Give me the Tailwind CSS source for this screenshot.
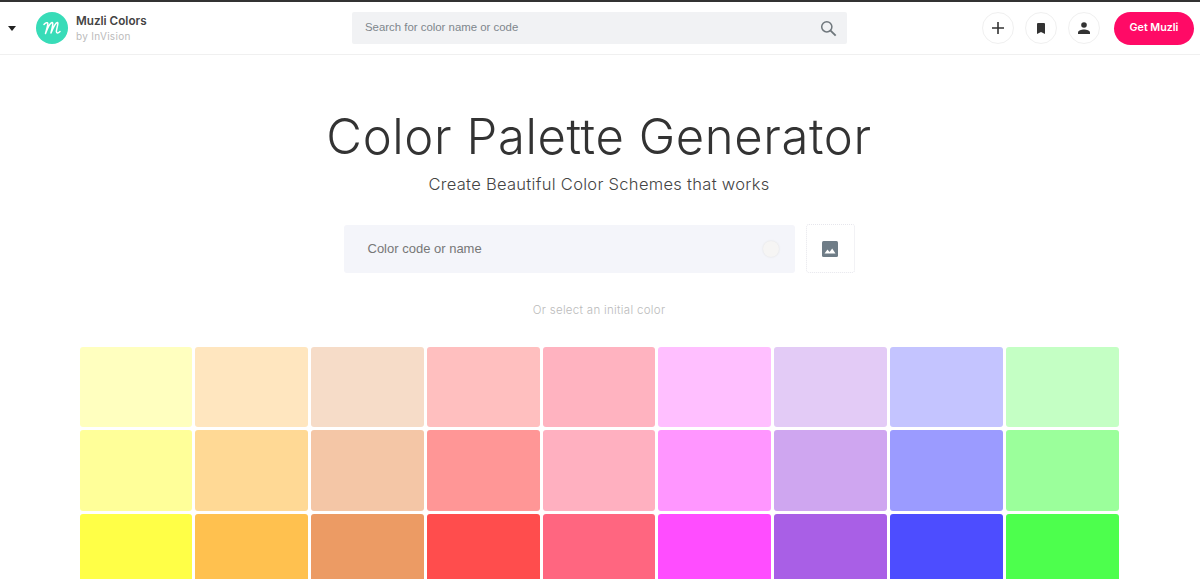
<!DOCTYPE html>
<html lang="en">
<head>
  <meta charset="UTF-8" />
  <meta name="viewport" content="width=device-width, initial-scale=1.0" />
  <title>Color Palette Generator</title>
  <script src="https://cdn.jsdelivr.net/npm/@tailwindcss/browser@4"></script>
</head>
<body class="bg-white font-['Inter',sans-serif] text-[#333] h-[579px] overflow-hidden">

  <!-- Top bar -->
  <header class="h-[55px] border-t-2 border-b border-t-[#333] border-b-[#f0f0f0] flex items-center relative">
    <span class="ml-[8px] w-0 h-0 border-l-[4px] border-r-[4px] border-t-[5px] border-l-transparent border-r-transparent border-t-[#222]"></span>
    <div class="ml-[20px] w-[32px] h-[32px] rounded-full bg-[#38dcb8] flex items-center justify-center">
      <svg width="18" height="14" viewBox="0 0 18 14" fill="none" stroke="#fff" stroke-width="1.500" stroke-linecap="round" stroke-linejoin="round"><path d="M1 3.500C2.500 1.500 4.500 1 4.800 2.500 5 4 3.500 9 2.500 12.500 4.500 7 7 2 9 1.500 10.500 1.300 9.500 5 8 12 10 7 12.500 1.800 14.300 1.500 15.700 1.500 14 6 13.400 10 13.200 12.500 15 12.500 17 10.500"/></svg>
    </div>
    <div class="ml-[8px] flex flex-col">
      <span class="text-[11.700px] leading-[16px] font-semibold text-[#444]">Muzli Colors</span>
      <span class="text-[10px] leading-[15px] tracking-[0.3px] text-[#bbb]">by InVision</span>
    </div>
    <div class="absolute left-[352px] top-[10px] w-[495px] h-[32px] bg-[#f1f2f4] rounded-[2px] flex items-center justify-between pl-[13px] pr-[10px]">
      <span class="font-['Liberation_Sans',sans-serif] text-[11.400px] text-[#7e868c]">Search for color name or code</span>
      <svg width="17" height="17" viewBox="0 0 18 18" fill="none" stroke="#6f777c" stroke-width="1.600"><circle cx="7.200" cy="7.200" r="5.400"/><path d="M11.200 11.200 16.600 16.600" stroke-width="2"/></svg>
    </div>
    <div class="ml-auto mr-[6px] flex items-center">
      <button class="w-[32px] h-[32px] rounded-full border border-[#f0f0f0] flex items-center justify-center">
        <svg width="12" height="12" viewBox="0 0 12 12" fill="none" stroke="#333" stroke-width="1.600"><path d="M6 0v12M0 6h12"/></svg>
      </button>
      <button class="ml-[11px] w-[32px] h-[32px] rounded-full border border-[#f0f0f0] flex items-center justify-center">
        <svg width="8" height="11" viewBox="0 0 8 11" fill="#333"><path d="M0 1a1 1 0 0 1 1-1h6a1 1 0 0 1 1 1v10L4 9 0 11z"/></svg>
      </button>
      <button class="ml-[11px] mr-[1px] w-[32px] h-[32px] rounded-full border border-[#f0f0f0] flex items-center justify-center">
        <svg width="12" height="12" viewBox="0 0 12 12" fill="#333"><circle cx="6" cy="3" r="2.800"/><path d="M0 12v-1.600C0 8.400 3.400 7.400 6 7.400s6 1 6 3V12z"/></svg>
      </button>
      <button class="ml-[13px] w-[80px] h-[33px] rounded-full bg-[#ff0a66] text-white text-[10.700px] font-semibold">Get Muzli</button>
    </div>
  </header>

  <!-- Hero -->
  <main class="flex flex-col items-center">
    <h1 class="mt-[52px] mr-[2px] text-[49px] leading-[60px] font-light tracking-[0.6px] text-[#333]">Color Palette Generator</h1>
    <p class="mt-[5px] mr-[2px] text-[16.500px] leading-[24px] font-light tracking-[0.3px] text-[#444]">Create Beautiful Color Schemes that works</p>

    <div class="mt-[28px] mr-[2px] flex items-center gap-[11px]">
      <div class="w-[451px] h-[48px] bg-[#f4f5fa] rounded-[3px] flex items-center justify-between pl-[24px] pr-[16px]">
        <span class="font-['Liberation_Sans',sans-serif] text-[13px] text-[#777]">Color code or name</span>
        <span class="w-[16px] h-[16px] rounded-full bg-[#f6f5f4] shadow-[0_0_2px_#ddd]"></span>
      </div>
      <div class="w-[49px] h-[49px] rounded-[3px] border border-dotted border-[#e6e6ec] flex items-center justify-center">
        <svg width="16" height="16" viewBox="0 0 16 16"><rect width="16" height="16" rx="1.500" fill="#6f7d87"/><path d="M2.500 12.500 5.500 8.500 7.500 11 10.200 7.500 13.500 12.500z" fill="#fff"/></svg>
      </div>
    </div>

    <p class="mt-[28px] mr-[2px] text-[11.500px] leading-[18px] tracking-[0.3px] font-light text-[#bbb]">Or select an initial color</p>

    <!-- Swatches -->
    <div class="mt-[28px] mr-[2px] w-[1039px] grid grid-cols-9 gap-[3px] auto-rows-[80.400px]">
      <div class="rounded-[3px] bg-[#ffffbf]"></div>
      <div class="rounded-[3px] bg-[#ffe6bf]"></div>
      <div class="rounded-[3px] bg-[#f6dcc8]"></div>
      <div class="rounded-[3px] bg-[#ffbfbf]"></div>
      <div class="rounded-[3px] bg-[#ffb3c0]"></div>
      <div class="rounded-[3px] bg-[#ffbfff]"></div>
      <div class="rounded-[3px] bg-[#e3cbf6]"></div>
      <div class="rounded-[3px] bg-[#c4c4ff]"></div>
      <div class="rounded-[3px] bg-[#c4ffc4]"></div>

      <div class="rounded-[3px] bg-[#ffff99]"></div>
      <div class="rounded-[3px] bg-[#ffd995]"></div>
      <div class="rounded-[3px] bg-[#f4c6a6]"></div>
      <div class="rounded-[3px] bg-[#ff9696]"></div>
      <div class="rounded-[3px] bg-[#ffb0c0]"></div>
      <div class="rounded-[3px] bg-[#ff96ff]"></div>
      <div class="rounded-[3px] bg-[#cfa6f0]"></div>
      <div class="rounded-[3px] bg-[#9b9bff]"></div>
      <div class="rounded-[3px] bg-[#9bff9b]"></div>

      <div class="rounded-[3px] bg-[#ffff47]"></div>
      <div class="rounded-[3px] bg-[#ffc14f]"></div>
      <div class="rounded-[3px] bg-[#ec9b64]"></div>
      <div class="rounded-[3px] bg-[#ff4d4d]"></div>
      <div class="rounded-[3px] bg-[#ff6680]"></div>
      <div class="rounded-[3px] bg-[#ff4dff]"></div>
      <div class="rounded-[3px] bg-[#a95fe6]"></div>
      <div class="rounded-[3px] bg-[#4d4dff]"></div>
      <div class="rounded-[3px] bg-[#4dff4d]"></div>
    </div>
  </main>

</body>
</html>
